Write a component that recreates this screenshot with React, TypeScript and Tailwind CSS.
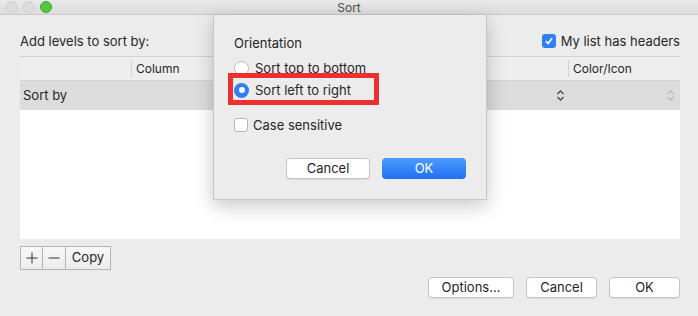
import type { ReactNode } from "react";

const Chevrons = ({ faded = false }: { faded?: boolean }) => (
  <svg width="9" height="13" viewBox="0 0 9 13" fill="none" stroke={faded ? "#b9b9b9" : "#4a4a4a"} strokeWidth="1.3">
    <path d="M1.5 5 L4.5 2 L7.5 5" />
    <path d="M1.5 8 L4.5 11 L7.5 8" />
  </svg>
);

const Btn = ({ children, className = "" }: { children: ReactNode; className?: string }) => (
  <div
    className={`flex items-center justify-center rounded-[4px] border border-[#c4c4c4] bg-white text-[13px] text-[#262626] shadow-[0_1px_1px_rgba(0,0,0,0.08)] ${className}`}
  >
    {children}
  </div>
);

const Light = ({ color }: { color: string }) => (
  <span className={`block h-[12px] w-[12px] rounded-full border ${color}`} />
);

export default function App() {
  return (
    <div className="relative h-[316px] w-[698px] overflow-hidden bg-[#ececec] font-['Inter','Liberation_Sans',sans-serif] text-[13px] text-[#262626]">
      {/* title bar */}
      <div className="relative flex h-[15px] items-center border-b border-[#c9c9c9] bg-[linear-gradient(#e9e9e9,#dcdcdc)] px-[6px]">
        <div className="flex gap-[5px]">
          <Light color="border-[#d0d0d0] bg-[#dddddd]" />
          <Light color="border-[#d0d0d0] bg-[#dddddd]" />
          <Light color="border-[#3faa2c] bg-[#56c540]" />
        </div>
        <span className="absolute left-0 right-0 text-center text-[12px] leading-[15px] text-[#4d4d4d]">Sort</span>
      </div>

      {/* main content */}
      <div className="pl-[20px] pr-[18px]">
        <div className="flex h-[41px] items-end justify-between pb-[5px]">
          <span>Add levels to sort by:</span>
          <div className="flex items-center gap-[5px]">
            <span className="flex h-[14px] w-[14px] items-center justify-center rounded-[3px] bg-[#2f7ff5]">
              <svg width="10" height="10" viewBox="0 0 10 10" fill="none" stroke="white" strokeWidth="1.7">
                <path d="M2 5.2 L4.2 7.5 L8 2.3" />
              </svg>
            </span>
            <span>My list has headers</span>
          </div>
        </div>

        {/* table */}
        <div className="border-t border-[#d2d2d2]">
          <div className="flex h-[24px] items-center border-b border-[#d2d2d2] bg-[#eeeeee] text-[12px]">
            <div className="h-[17px] w-[112px] border-r border-[#d2d2d2]" />
            <div className="w-[436px] pl-[4px]">Column</div>
            <div className="h-[17px] border-l border-[#d2d2d2] pl-[4px] leading-[17px]">Color/Icon</div>
          </div>
          <div className="flex h-[29px] items-center bg-[#dcdcdc]">
            <span className="w-[536px] pl-[3px]">Sort by</span>
            <Chevrons />
            <span className="flex-1" />
            <span className="pr-[5px]">
              <Chevrons faded />
            </span>
          </div>
          <div className="h-[129px] bg-white" />
        </div>

        {/* +/-/copy */}
        <div className="mt-[7px] flex h-[24px] w-fit border border-[#b4b4b4] bg-[linear-gradient(#f7f7f7,#ececec)]">
          <div className="flex w-[22px] items-center justify-center border-r border-[#b4b4b4]">
            <svg width="12" height="12" viewBox="0 0 12 12" stroke="#333" strokeWidth="1">
              <path d="M6 0.5 V11.5 M0.5 6 H11.5" />
            </svg>
          </div>
          <div className="flex w-[23px] items-center justify-center border-r border-[#b4b4b4]">
            <svg width="12" height="12" viewBox="0 0 12 12" stroke="#333" strokeWidth="1">
              <path d="M0.5 6 H11.5" />
            </svg>
          </div>
          <div className="flex w-[44px] items-center justify-center">Copy</div>
        </div>

        <div className="mt-[7px] flex justify-end gap-[12px]">
          <Btn className="h-[21px] w-[86px]">Options...</Btn>
          <Btn className="h-[21px] w-[71px]">Cancel</Btn>
          <Btn className="h-[21px] w-[71px]">OK</Btn>
        </div>
      </div>

      {/* sheet */}
      <div className="absolute left-[213px] top-[15px] h-[185px] w-[274px] border border-t-0 border-[#c6c6c6] bg-[#ececec] px-[20px] shadow-[0_6px_18px_rgba(0,0,0,0.22)]">
        <div className="pt-[20px] leading-[16px]">Orientation</div>
        <div className="mt-[9px] flex items-center gap-[6px] leading-[16px]">
          <span className="h-[15px] w-[15px] rounded-full border border-[#b9b9b9] bg-white" />
          <span>Sort top to bottom</span>
        </div>
        <div className="mt-[6px] flex items-center gap-[6px] leading-[16px]">
          <span className="flex h-[15px] w-[15px] items-center justify-center rounded-full bg-[#2f7ff5]">
            <span className="h-[6px] w-[6px] rounded-full bg-white" />
          </span>
          <span>Sort left to right</span>
        </div>
        <div className="mt-[19px] flex items-center gap-[5px] leading-[16px]">
          <span className="h-[14px] w-[14px] rounded-[3px] border border-[#b5b5b5] bg-white" />
          <span>Case sensitive</span>
        </div>
        <div className="mt-[25px] flex justify-end gap-[12px]">
          <Btn className="h-[21px] w-[84px]">Cancel</Btn>
          <div className="flex h-[21px] w-[84px] items-center justify-center rounded-[4px] bg-[linear-gradient(#4e9bfa,#1f6ff4)] text-white">
            OK
          </div>
        </div>

        {/* red annotation box */}
        <div className="absolute left-[14px] top-[58px] h-[32px] w-[151px] border-[5px] border-[#ec3030]" />
      </div>
    </div>
  );
}
